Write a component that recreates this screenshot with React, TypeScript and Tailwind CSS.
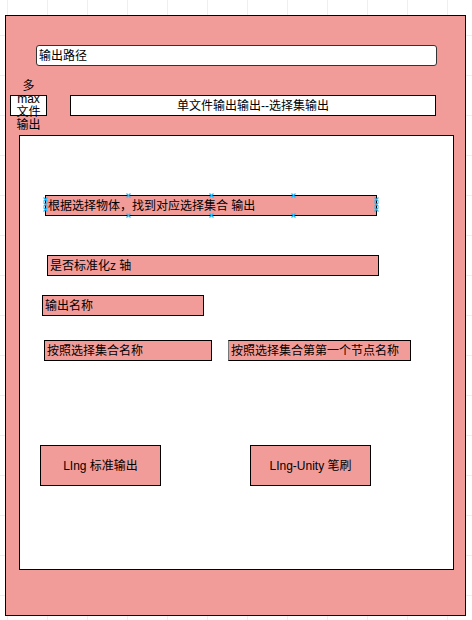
import React from "react";

function Cross({ className }: { className: string }) {
  return (
    <svg className={`absolute w-[5px] h-[5px] ${className}`} viewBox="0 0 5 5">
      <path d="M0.5 0.5 L4.5 4.5 M4.5 0.5 L0.5 4.5" stroke="#29b6f2" strokeWidth="1.1" fill="none" />
    </svg>
  );
}

export default function App() {
  return (
    <div
      className="relative w-[472px] min-h-[620px] bg-white bg-[linear-gradient(to_right,#efefef_1px,transparent_1px),linear-gradient(to_bottom,#efefef_1px,transparent_1px)] bg-size-[40px_40px] bg-position-[7px_35px] pt-[15px] pl-[5px] text-[12px] text-black font-['Liberation_Sans','Noto_Sans_CJK_SC',sans-serif]"
    >
      <div className="box-border w-[461px] h-[601px] border border-black bg-[#f19c99] flex flex-col items-start">
        {/* output path */}
        <div className="box-border ml-[30px] mt-[29px] w-[401px] h-[21px] rounded-[3px] border border-[#333] bg-white flex items-center pl-[2px] leading-none">
          输出路径
        </div>

        {/* second row */}
        <div className="flex items-start mt-[29px] ml-[4px]">
          <div className="relative box-border w-[37px] h-[21px] border border-black bg-white">
            <div className="absolute left-1/2 top-1/2 -translate-x-1/2 -translate-y-1/2 text-center leading-[13px] whitespace-nowrap">
              多<br />max<br />文件<br />输出
            </div>
          </div>
          <div className="box-border ml-[23px] w-[366px] h-[21px] border border-black bg-white flex items-center justify-center leading-none">
            单文件输出输出--选择集输出
          </div>
        </div>

        {/* inner panel */}
        <div className="box-border ml-[13px] mt-[19px] w-[435px] h-[435px] border border-black bg-white flex flex-col items-start">
          <div className="relative box-border ml-[25px] mt-[59px] w-[332px] h-[21px] border border-black bg-[#f19c99] flex items-center pl-[2px] leading-none">
            根据选择物体，找到对应选择集合 输出
            <Cross className="left-[80px] -top-[3px]" />
            <Cross className="left-[163px] -top-[3px]" />
            <Cross className="left-[245px] -top-[3px]" />
            <Cross className="left-[80px] -bottom-[3px]" />
            <Cross className="left-[163px] -bottom-[3px]" />
            <Cross className="left-[245px] -bottom-[3px]" />
            <Cross className="-left-[3px] top-[1px]" />
            <Cross className="-left-[3px] top-[6px]" />
            <Cross className="-left-[3px] top-[11px]" />
            <Cross className="-right-[3px] top-[1px]" />
            <Cross className="-right-[3px] top-[6px]" />
            <Cross className="-right-[3px] top-[11px]" />
          </div>

          <div className="box-border ml-[27px] mt-[39px] w-[332px] h-[21px] border border-black bg-[#f19c99] flex items-center pl-[2px] leading-none">
            是否标准化z 轴
          </div>

          <div className="box-border ml-[22px] mt-[19px] w-[162px] h-[21px] border border-black bg-[#f19c99] flex items-center pl-[2px] leading-none">
            输出名称
          </div>

          <div className="flex items-start ml-[24px] mt-[24px]">
            <div className="box-border w-[168px] h-[21px] border border-black bg-[#f19c99] flex items-center pl-[2px] leading-none">
              按照选择集合名称
            </div>
            <div className="box-border ml-[16px] w-[183px] h-[21px] border border-black border-l-[#777] bg-[#f19c99] flex items-center pl-[2px] leading-none">
              按照选择集合第第一个节点名称
            </div>
          </div>

          <div className="flex items-start ml-[20px] mt-[84px]">
            <div className="box-border w-[121px] h-[41px] border border-black bg-[#f19c99] flex items-center justify-center leading-none">
              LIng 标准输出
            </div>
            <div className="box-border ml-[89px] w-[121px] h-[41px] border border-black bg-[#f19c99] flex items-center justify-center leading-none">
              LIng-Unity 笔刷
            </div>
          </div>
        </div>
      </div>
    </div>
  );
}
